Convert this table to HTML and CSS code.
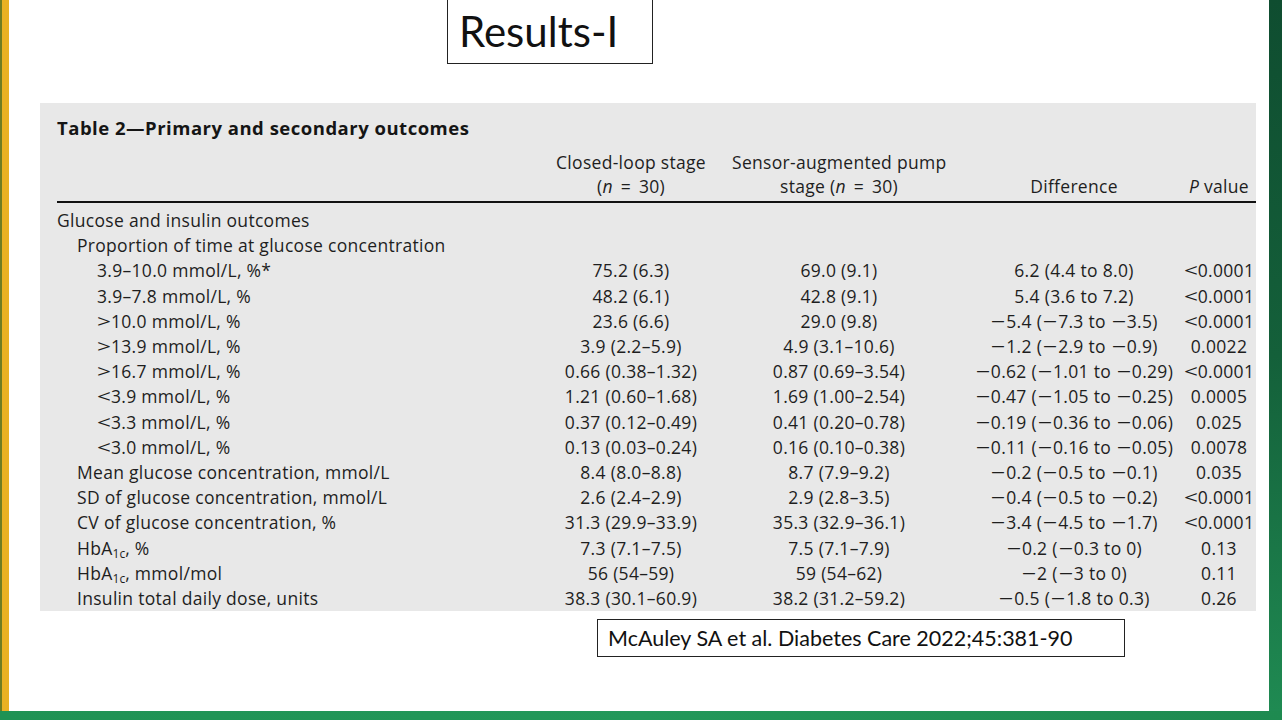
FILE: index.html
```html
<!DOCTYPE html>
<html lang="en">
<head>
<meta charset="utf-8">
<title>Results-I</title>
<link rel="stylesheet" href="styles.css">
</head>
<body>
<div class="main">
  <div class="stripe-left"></div>
  <div class="content">
    <div class="title-box">Results-I</div>
    <div class="table">
      <div class="caption">Table 2—Primary and secondary outcomes</div>
      <div class="row head">
        <div></div>
        <div class="c">Closed-loop stage<br>(<i>n</i> <span class="eq">=</span> 30)</div>
        <div class="c">Sensor-augmented pump<br>stage (<i>n</i> <span class="eq">=</span> 30)</div>
        <div></div>
        <div class="c">Difference</div>
        <div class="c"><i>P</i> value</div>
      </div>
      <div class="rule"></div>
      <div class="body">
        <div class="row"><div class="l0">Glucose and insulin outcomes</div><div></div><div></div><div></div><div></div><div></div></div>
        <div class="row"><div class="l1">Proportion of time at glucose concentration</div><div></div><div></div><div></div><div></div><div></div></div>
        <div class="row"><div class="l2">3.9–10.0 mmol/L, %*</div><div class="c">75.2 (6.3)</div><div class="c">69.0 (9.1)</div><div></div><div class="c">6.2 (4.4 to 8.0)</div><div class="c"><span class="op">&lt;</span>0.0001</div></div>
        <div class="row"><div class="l2">3.9–7.8 mmol/L, %</div><div class="c">48.2 (6.1)</div><div class="c">42.8 (9.1)</div><div></div><div class="c">5.4 (3.6 to 7.2)</div><div class="c"><span class="op">&lt;</span>0.0001</div></div>
        <div class="row"><div class="l2"><span class="op">&gt;</span>10.0 mmol/L, %</div><div class="c">23.6 (6.6)</div><div class="c">29.0 (9.8)</div><div></div><div class="c"><span class="m">−</span>5.4 (<span class="m">−</span>7.3 to <span class="m">−</span>3.5)</div><div class="c"><span class="op">&lt;</span>0.0001</div></div>
        <div class="row"><div class="l2"><span class="op">&gt;</span>13.9 mmol/L, %</div><div class="c">3.9 (2.2–5.9)</div><div class="c">4.9 (3.1–10.6)</div><div></div><div class="c"><span class="m">−</span>1.2 (<span class="m">−</span>2.9 to <span class="m">−</span>0.9)</div><div class="c">0.0022</div></div>
        <div class="row"><div class="l2"><span class="op">&gt;</span>16.7 mmol/L, %</div><div class="c">0.66 (0.38–1.32)</div><div class="c">0.87 (0.69–3.54)</div><div></div><div class="c"><span class="m">−</span>0.62 (<span class="m">−</span>1.01 to <span class="m">−</span>0.29)</div><div class="c"><span class="op">&lt;</span>0.0001</div></div>
        <div class="row"><div class="l2"><span class="op">&lt;</span>3.9 mmol/L, %</div><div class="c">1.21 (0.60–1.68)</div><div class="c">1.69 (1.00–2.54)</div><div></div><div class="c"><span class="m">−</span>0.47 (<span class="m">−</span>1.05 to <span class="m">−</span>0.25)</div><div class="c">0.0005</div></div>
        <div class="row"><div class="l2"><span class="op">&lt;</span>3.3 mmol/L, %</div><div class="c">0.37 (0.12–0.49)</div><div class="c">0.41 (0.20–0.78)</div><div></div><div class="c"><span class="m">−</span>0.19 (<span class="m">−</span>0.36 to <span class="m">−</span>0.06)</div><div class="c">0.025</div></div>
        <div class="row"><div class="l2"><span class="op">&lt;</span>3.0 mmol/L, %</div><div class="c">0.13 (0.03–0.24)</div><div class="c">0.16 (0.10–0.38)</div><div></div><div class="c"><span class="m">−</span>0.11 (<span class="m">−</span>0.16 to <span class="m">−</span>0.05)</div><div class="c">0.0078</div></div>
        <div class="row"><div class="l1">Mean glucose concentration, mmol/L</div><div class="c">8.4 (8.0–8.8)</div><div class="c">8.7 (7.9–9.2)</div><div></div><div class="c"><span class="m">−</span>0.2 (<span class="m">−</span>0.5 to <span class="m">−</span>0.1)</div><div class="c">0.035</div></div>
        <div class="row"><div class="l1">SD of glucose concentration, mmol/L</div><div class="c">2.6 (2.4–2.9)</div><div class="c">2.9 (2.8–3.5)</div><div></div><div class="c"><span class="m">−</span>0.4 (<span class="m">−</span>0.5 to <span class="m">−</span>0.2)</div><div class="c"><span class="op">&lt;</span>0.0001</div></div>
        <div class="row"><div class="l1">CV of glucose concentration, %</div><div class="c">31.3 (29.9–33.9)</div><div class="c">35.3 (32.9–36.1)</div><div></div><div class="c"><span class="m">−</span>3.4 (<span class="m">−</span>4.5 to <span class="m">−</span>1.7)</div><div class="c"><span class="op">&lt;</span>0.0001</div></div>
        <div class="row"><div class="l1">HbA<sub>1c</sub>, %</div><div class="c">7.3 (7.1–7.5)</div><div class="c">7.5 (7.1–7.9)</div><div></div><div class="c"><span class="m">−</span>0.2 (<span class="m">−</span>0.3 to 0)</div><div class="c">0.13</div></div>
        <div class="row"><div class="l1">HbA<sub>1c</sub>, mmol/mol</div><div class="c">56 (54–59)</div><div class="c">59 (54–62)</div><div></div><div class="c"><span class="m">−</span>2 (<span class="m">−</span>3 to 0)</div><div class="c">0.11</div></div>
        <div class="row"><div class="l1">Insulin total daily dose, units</div><div class="c">38.3 (30.1–60.9)</div><div class="c">38.2 (31.2–59.2)</div><div></div><div class="c"><span class="m">−</span>0.5 (<span class="m">−</span>1.8 to 0.3)</div><div class="c">0.26</div></div>
      </div>
    </div>
    <div class="cite">McAuley SA et al. Diabetes Care 2022;45:381-90</div>
  </div>
  <div class="stripe-right"></div>
</div>
<div class="bottom-bar"></div>
</body>
</html>
```

FILE: styles.css
```css
html, body {
  margin: 0;
  padding: 0;
}
body {
  width: 1282px;
  height: 720px;
  overflow: hidden;
  display: flex;
  flex-direction: column;
  background: #ffffff;
  font-family: "Open Sans", "Noto Sans", sans-serif;
  color: #1e1e1e;
}
.main {
  flex: 1;
  display: flex;
  min-height: 0;
}
.stripe-left {
  width: 9px;
  flex: none;
  background: linear-gradient(to right, #6f7d22 0, #6f7d22 2px, #e9b223 2px, #e9b223 9px);
}
.stripe-right {
  width: 13px;
  flex: none;
  background: linear-gradient(to bottom, #0f4d30 0%, #14603a 50%, #1f8a52 100%);
}
.bottom-bar {
  height: 9px;
  flex: none;
  background: linear-gradient(to right, #1f9254, #22985a 50%, #1e8a50);
}
.content {
  flex: 1;
  padding-left: 31px;
  display: flex;
  flex-direction: column;
  align-items: flex-start;
}
.title-box {
  margin-top: -2px;
  margin-left: 407px;
  width: 193px;
  height: 64px;
  padding-left: 11px;
  border: 1px solid #222;
  font-family: "Lato", "Open Sans", sans-serif;
  font-size: 42px;
  line-height: 64px;
  color: #111;
}
.table {
  margin-top: 39px;
  width: 1199px;
  padding-left: 17px;
  background: #e8e8e8;
  font-size: 17.5px;
  letter-spacing: 0.3px;
}
.caption {
  padding-top: 13px;
  font-weight: 700;
  font-size: 18.5px;
  letter-spacing: 0.5px;
  line-height: 24px;
  color: #151515;
}
.row {
  display: grid;
  grid-template-columns: 473px 202px 214px 20px 216px 74px;
  line-height: 25.2px;
  white-space: nowrap;
}
.row.head {
  margin-top: 10px;
  line-height: 24px;
  align-items: end;
}
.eq {
  padding: 0 3px;
}
.m {
  display: inline-block;
  width: 16px;
  text-align: center;
  transform: scaleX(1.45);
  letter-spacing: 0;
}
.op {
  display: inline-block;
  width: 14px;
  text-align: left;
  transform: scaleX(1.4);
  transform-origin: left center;
  letter-spacing: 0;
}
.rule {
  margin-top: 3px;
  height: 2px;
  background: #111;
}
.body {
  padding-top: 5px;
}
.c {
  text-align: center;
}
.l0 { padding-left: 0; }
.l1 { padding-left: 20px; }
.l2 { padding-left: 40px; }
sub {
  font-size: 12px;
  line-height: 0;
  vertical-align: -3px;
  letter-spacing: 0;
}
.cite {
  margin-top: 8px;
  margin-left: 557px;
  width: 516px;
  height: 36px;
  padding-left: 10px;
  border: 1px solid #222;
  font-family: "Lato", "Open Sans", sans-serif;
  font-size: 21.5px;
  line-height: 36px;
  color: #111;
}
```
